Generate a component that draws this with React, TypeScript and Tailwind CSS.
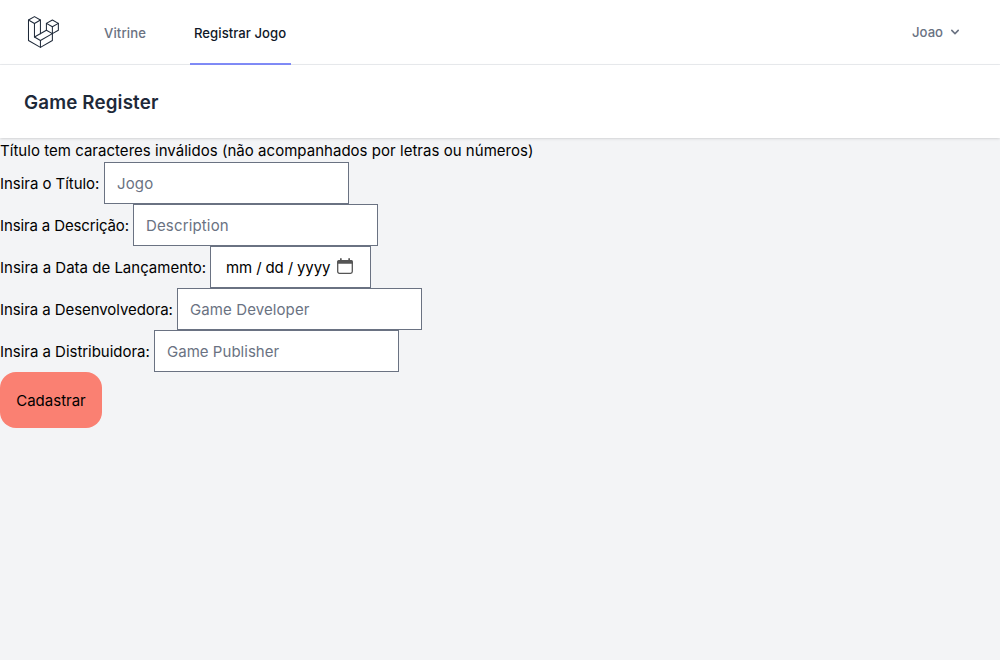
import React from "react";

function Logo() {
  return (
    <svg viewBox="0 0 316 316" className="h-9 w-9 shrink-0 text-gray-800" fill="none" stroke="currentColor" strokeWidth="9" strokeLinejoin="round" strokeLinecap="round">
      <path d="M91.8 22.6 144.2 52.6 91.8 82.8 39.4 52.6Z" />
      <path d="M39.4 52.6V232.2L144.2 292.6 249.1 232.2V172.4" />
      <path d="M144.2 52.6V172.4M91.8 82.8V202L144.2 232.2V292.6" />
      <path d="M91.8 202 196.7 142.1 249.1 172.4 144.2 232.2" />
      <path d="M249.1 52.1 301.6 82.3 249.1 112.5 196.7 82.3Z" />
      <path d="M196.7 82.3V142.1M301.6 82.3V142.1L249.1 172.4V112.5" />
    </svg>
  );
}

function CalendarIcon() {
  return (
    <svg viewBox="0 0 16 16" className="h-4 w-4 shrink-0 text-[#555555]">
      <rect x="0.7" y="2.7" width="14.6" height="12.6" rx="1.7" fill="none" stroke="currentColor" strokeWidth="1.3" />
      <path d="M0.1 5.8V3.9Q0.1 2 2 2H3V0.3H4.7V2H11.3V0.3H13V2H14Q15.9 2 15.9 3.9V5.8Z" fill="currentColor" />
    </svg>
  );
}

type FieldProps = {
  label: string;
  labelClass: string;
  placeholder: string;
  inputClass: string;
};

function Field({ label, labelClass, placeholder, inputClass }: FieldProps) {
  return (
    <div className="flex h-[42px] items-center">
      <label className={`shrink-0 pt-[2px] whitespace-nowrap ${labelClass}`}>{label}</label>
      <input
        type="text"
        placeholder={placeholder}
        className={`h-[42px] w-[245px] shrink-0 border border-gray-500 bg-white px-3 placeholder:text-gray-500 ${inputClass}`}
      />
    </div>
  );
}

export default function App() {
  return (
    <div className="min-h-screen bg-gray-100 font-['Inter','Liberation_Sans',sans-serif] text-[15px] leading-6 text-black">
      <nav className="flex h-[65px] border-b border-gray-200/80 bg-white px-6 text-[13.125px] leading-5 font-medium">
        <div className="flex h-16 items-center">
          <Logo />
        </div>
        <a className="ml-10 flex h-[65px] w-[50px] items-center px-1 pt-px whitespace-nowrap text-gray-500 tracking-[0.12px]">Vitrine</a>
        <a className="ml-10 flex h-[65px] w-[101px] items-center border-b-2 border-[#818cf8] px-1 pt-[3px] whitespace-nowrap text-gray-900 tracking-[0.05px]">
          Registrar Jogo
        </a>
        <button className="mr-[13px] ml-auto flex h-16 items-center gap-1 text-gray-500">
          <span>Joao</span>
          <svg viewBox="0 0 20 20" className="h-4 w-4" fill="currentColor">
            <path fillRule="evenodd" clipRule="evenodd" d="M5.293 7.293a1 1 0 011.414 0L10 10.586l3.293-3.293a1 1 0 111.414 1.414l-4 4a1 1 0 01-1.414 0l-4-4a1 1 0 010-1.414z" />
          </svg>
        </button>
      </nav>
      <header className="relative bg-white px-6 pt-[25px] pb-[23px] shadow-[0_1px_3px_0_rgba(0,0,0,0.1),0_1px_2px_-1px_rgba(0,0,0,0.1)]">
        <h2 className="text-[18.75px] leading-[25px] font-semibold tracking-[0.16px] text-gray-800">Game Register</h2>
      </header>
      <main>
        <p className="h-6 pt-px tracking-[0.03px]">Título tem caracteres inválidos (não acompanhados por letras ou números)</p>
        <form>
          <Field label="Insira o Título:" labelClass="w-[104px] tracking-[-0.04px]" placeholder="Jogo" inputClass="tracking-[0.15px]" />
          <Field label="Insira a Descrição:" labelClass="w-[133px] tracking-[-0.13px]" placeholder="Description" inputClass="tracking-[0.15px]" />
          <div className="flex h-[42px] items-center">
            <label className="w-[210px] shrink-0 pt-[2px] whitespace-nowrap">Insira a Data de Lançamento:</label>
            <div className="flex h-[42px] w-[161px] items-center border border-gray-500 bg-white pl-[15px]">
              <span className="flex w-[111px] gap-[4px] pt-[2px] whitespace-nowrap tracking-[-0.08px]">
                <span>mm</span>
                <span>/</span>
                <span>dd</span>
                <span>/</span>
                <span>yyyy</span>
              </span>
              <span className="pb-[3px]">
                <CalendarIcon />
              </span>
            </div>
          </div>
          <Field label="Insira a Desenvolvedora:" labelClass="w-[177px] tracking-[-0.07px]" placeholder="Game Developer" inputClass="tracking-[0.1px]" />
          <Field label="Insira a Distribuidora:" labelClass="w-[154px] tracking-[-0.03px]" placeholder="Game Publisher" inputClass="tracking-[0.03px]" />
          <button type="button" className="flex h-14 w-[102px] items-center justify-center rounded-2xl bg-[#fa8072] pt-px">
            Cadastrar
          </button>
        </form>
      </main>
    </div>
  );
}
